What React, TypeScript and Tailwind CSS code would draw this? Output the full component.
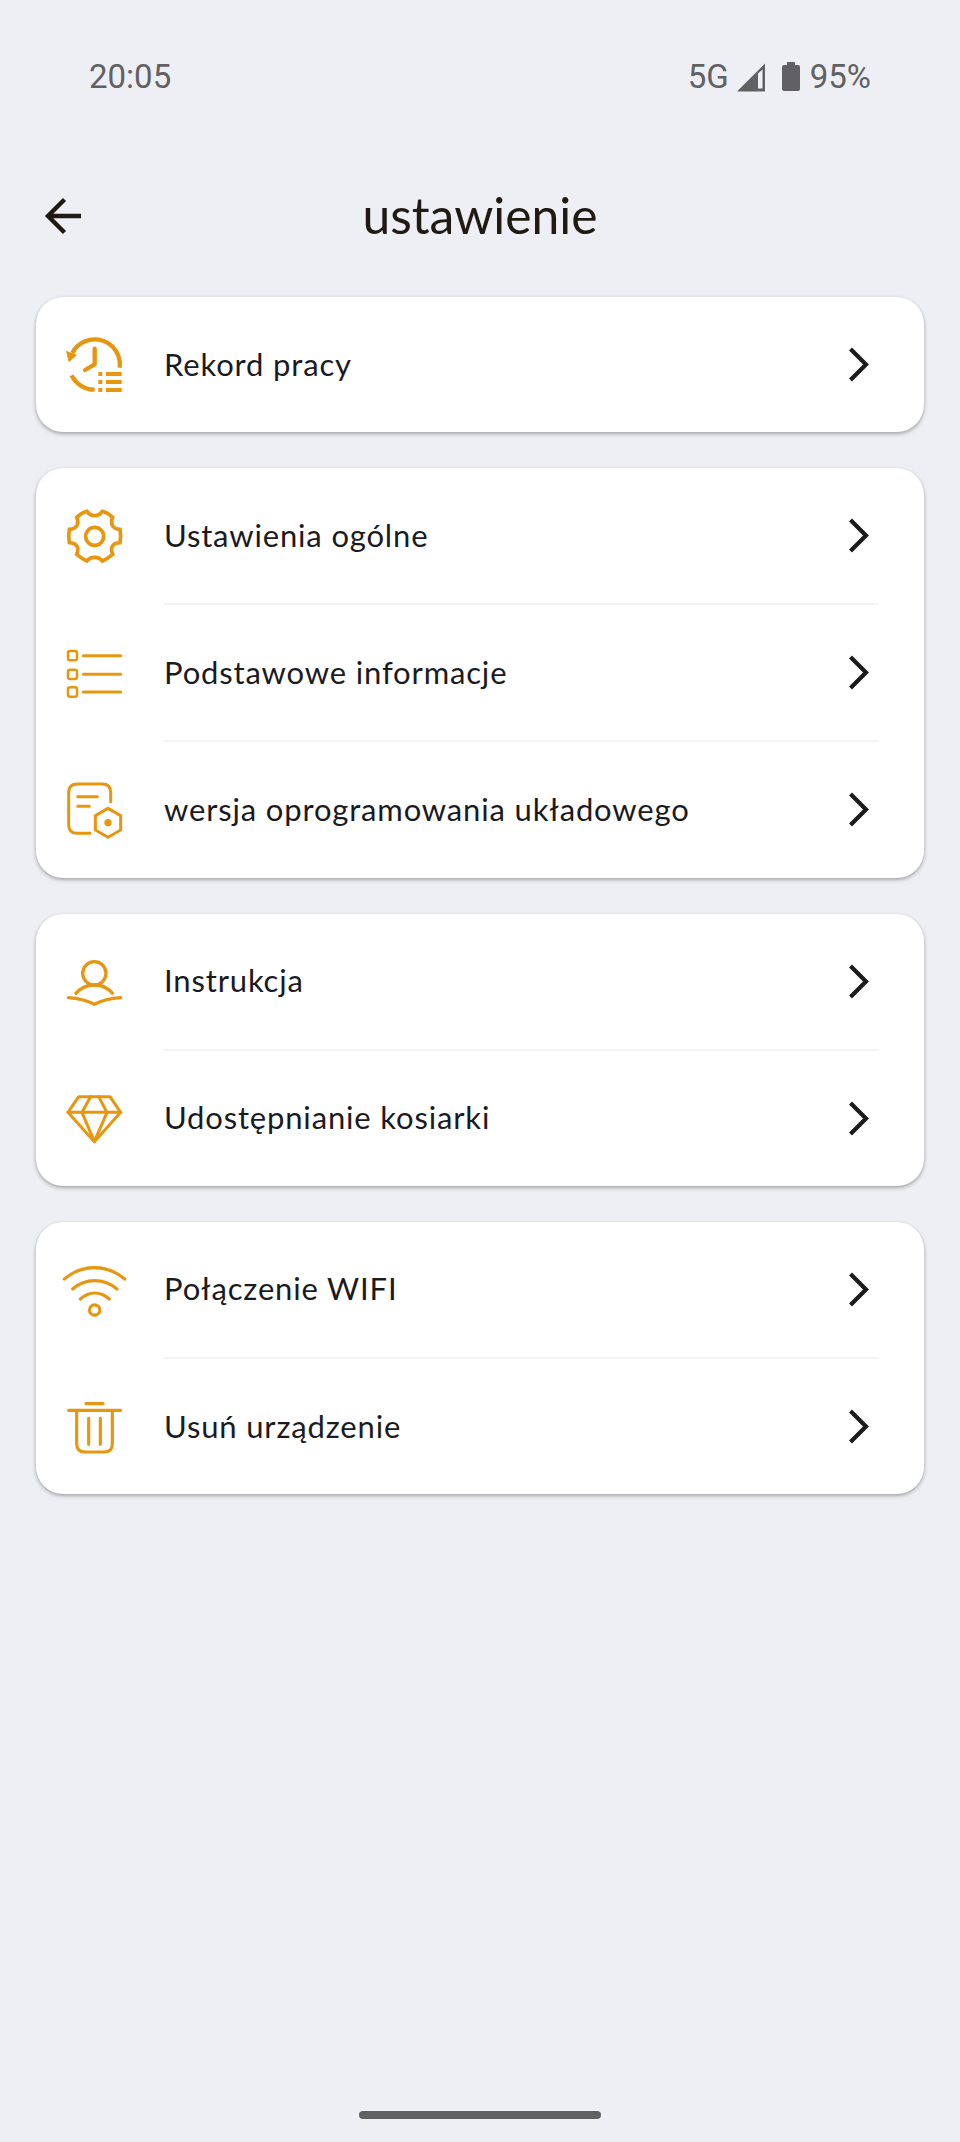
import type { ReactNode } from "react";

function Glyph({ children, width = 9 }: { children: ReactNode; width?: number }) {
  return (
    <svg
      className="h-[91px] w-[90px] shrink-0"
      viewBox="0 0 270 273"
      fill="none"
      stroke="#e8960f"
      strokeWidth={width}
      strokeLinecap="round"
      strokeLinejoin="round"
    >
      {children}
    </svg>
  );
}

const HistoryIcon = () => (
  <Glyph width={13}>
    <g transform="translate(0 2)" strokeLinecap="butt">
      <path d="M67 100A75.5 75.5 0 0 1 209 144" />
      <path d="M65 167A76 76 0 0 0 134 210" />
      <path d="M48 93L81 106L56 128Z" fill="#e8960f" stroke="none" />
      <path d="M134 87V134L105 151" strokeLinecap="round" />
      <path d="M145 163h12M145 187h12M145 211h12M168 163h47M168 187h47M168 211h47" strokeWidth="12" />
    </g>
  </Glyph>
);

const GearIcon = () => (
  <Glyph width={11}>
    <circle cx="134" cy="139" r="27" />
    <path
      d="M111 64Q119 77 134 77Q149 77 157 64Q173 68 188 82C180 99 186 117 210 118Q214 139 210 158C186 159 180 175 188 193Q173 206 157 213Q149 202 134 202Q119 202 111 213Q95 206 80 193C88 175 82 159 58 158Q54 139 58 118C82 117 88 99 80 82Q95 68 111 64Z"
      strokeLinejoin="miter"
    />
  </Glyph>
);

const ListIcon = () => (
  <Glyph width={9}>
    <g transform="translate(0 9)">
      <g strokeWidth="7.5">
        <rect x="54" y="63" width="27" height="28" rx="6" />
        <rect x="54" y="119" width="27" height="28" rx="6" />
        <rect x="54" y="172" width="27" height="28" rx="6" />
      </g>
      <path d="M100 77H212M100 133H212M100 186H212" />
    </g>
  </Glyph>
);

const FirmwareIcon = () => (
  <Glyph width={9}>
    <g transform="translate(0 -402)">
      <path d="M182 515V487Q182 462 157 462H82Q56 462 56 487V584Q56 610 82 610H120" />
      <path d="M83 500H142M83 529H118" />
      <path d="M174 535L212 557V600L174 622L136 600V557Z" strokeLinejoin="miter" />
      <circle cx="174" cy="578" r="11" fill="#e8960f" stroke="none" />
    </g>
  </Glyph>
);

const ManualIcon = () => (
  <Glyph width={10}>
    <g transform="translate(0 15)">
      <circle cx="133" cy="97" r="35" />
      <path d="M75 160Q98 132 133 132Q168 132 190 160" strokeLinecap="butt" />
      <path d="M55 170Q100 173 133 190Q166 173 212 170" />
    </g>
  </Glyph>
);

const DiamondIcon = () => (
  <Glyph width={9}>
    <g transform="translate(0 -396)">
      <path d="M86 467H180L212 514L133 602L54 514Z" />
      <path d="M54 514H212M122 467L96 514L133 602L171 514L146 467" />
    </g>
  </Glyph>
);

const WifiIcon = () => (
  <Glyph width={9.5}>
    <g transform="translate(0 -9)">
      <path d="M43 114Q84 80 133 80Q183 80 224 114" />
      <path d="M68 144Q97 119 134 119Q171 119 201 144" />
      <path d="M91 174Q111 156 134 156Q157 156 178 174" />
      <circle cx="134" cy="207" r="15.5" />
    </g>
  </Glyph>
);

const TrashIcon = () => (
  <Glyph width={9.5}>
    <g transform="translate(0 -420)">
      <path d="M108 488H159M56 508H212" />
      <path d="M80 510V608Q80 633 105 633H163Q187 633 187 608V510" />
      <path d="M116 532V610M151 532V610" />
    </g>
  </Glyph>
);

type Item = { label: string; icon: () => ReactNode };

const groups: Item[][] = [
  [{ label: "Rekord pracy", icon: HistoryIcon }],
  [
    { label: "Ustawienia ogólne", icon: GearIcon },
    { label: "Podstawowe informacje", icon: ListIcon },
    { label: "wersja oprogramowania układowego", icon: FirmwareIcon },
  ],
  [
    { label: "Instrukcja", icon: ManualIcon },
    { label: "Udostępnianie kosiarki", icon: DiamondIcon },
  ],
  [
    { label: "Połączenie WIFI", icon: WifiIcon },
    { label: "Usuń urządzenie", icon: TrashIcon },
  ],
];

function Row({ label, icon: Icon }: Item) {
  return (
    <button className="flex h-[135.15px] w-full items-center pr-[54px] pl-[14px] text-left">
      <Icon />
      <span className="ml-[24px] flex-1 pb-[2px] text-[31px] leading-[40px] tracking-[0.84px] whitespace-nowrap text-[#1b1b1f]">
        {label}
      </span>
      <svg className="h-[35px] w-[24px]" viewBox="0 0 24 35" fill="none" stroke="#1b1b1d" strokeWidth="4.2">
        <path d="M4.5 2L20 17.5L4.5 33" />
      </svg>
    </button>
  );
}

export default function App() {
  return (
    <div className="flex h-[2142px] w-[960px] flex-col bg-[#eeeff4] font-['Lato',sans-serif]">
      <div className="flex h-[154px] items-center justify-between pr-[89px] pl-[89px] font-['Roboto',sans-serif] text-[33px] text-[#616163]">
        <span>20:05</span>
        <div className="flex items-center">
          <span>5G</span>
          <svg className="ml-[8px] h-[29px] w-[28px]" viewBox="0 0 28 29" fill="#616163">
            <path fillRule="evenodd" d="M0 28.5L28 0.5V28.5ZM21 10.5V25.5H25.5V6.5Z" />
          </svg>
          <svg className="ml-[17px] h-[30px] w-[18px]" viewBox="0 0 18 30" fill="#616163">
            <path d="M5 0H13V3H16Q18 3 18 5V27Q18 29 16 29H2Q0 29 0 27V5Q0 3 2 3H5Z" />
          </svg>
          <span className="ml-[10px]">95%</span>
        </div>
      </div>
      <header className="flex h-[124px] items-center px-[36px]">
        <svg className="h-[53px] w-[53px]" viewBox="0 0 53 53" fill="none" stroke="#1f1b13" strokeWidth="4.4">
          <path d="M45 26H12.5M28.5 9.5L12 26L28.5 42.5" />
        </svg>
        <h1 className="flex-1 pr-[53px] pb-[2px] text-center text-[49.8px] leading-[60px] text-[#1f1b13]">ustawienie</h1>
      </header>
      <main className="mt-[19px] flex flex-col gap-[36px] px-[36px]">
        {groups.map((items) => (
          <section
            key={items[0].label}
            className="rounded-[27px] bg-white shadow-[0_2px_4px_rgba(0,0,0,0.26),0_1px_3px_rgba(0,0,0,0.1)]"
          >
            {items.map((item, i) => (
              <div key={item.label}>
                {i > 0 && <div className="mr-[45px] ml-[128px] h-[2px] bg-[#f3f3f4]" />}
                <Row {...item} />
              </div>
            ))}
          </section>
        ))}
      </main>
      <div className="mx-auto mt-auto mb-[23px] h-[8px] w-[242px] rounded-full bg-[#616163]" />
    </div>
  );
}
